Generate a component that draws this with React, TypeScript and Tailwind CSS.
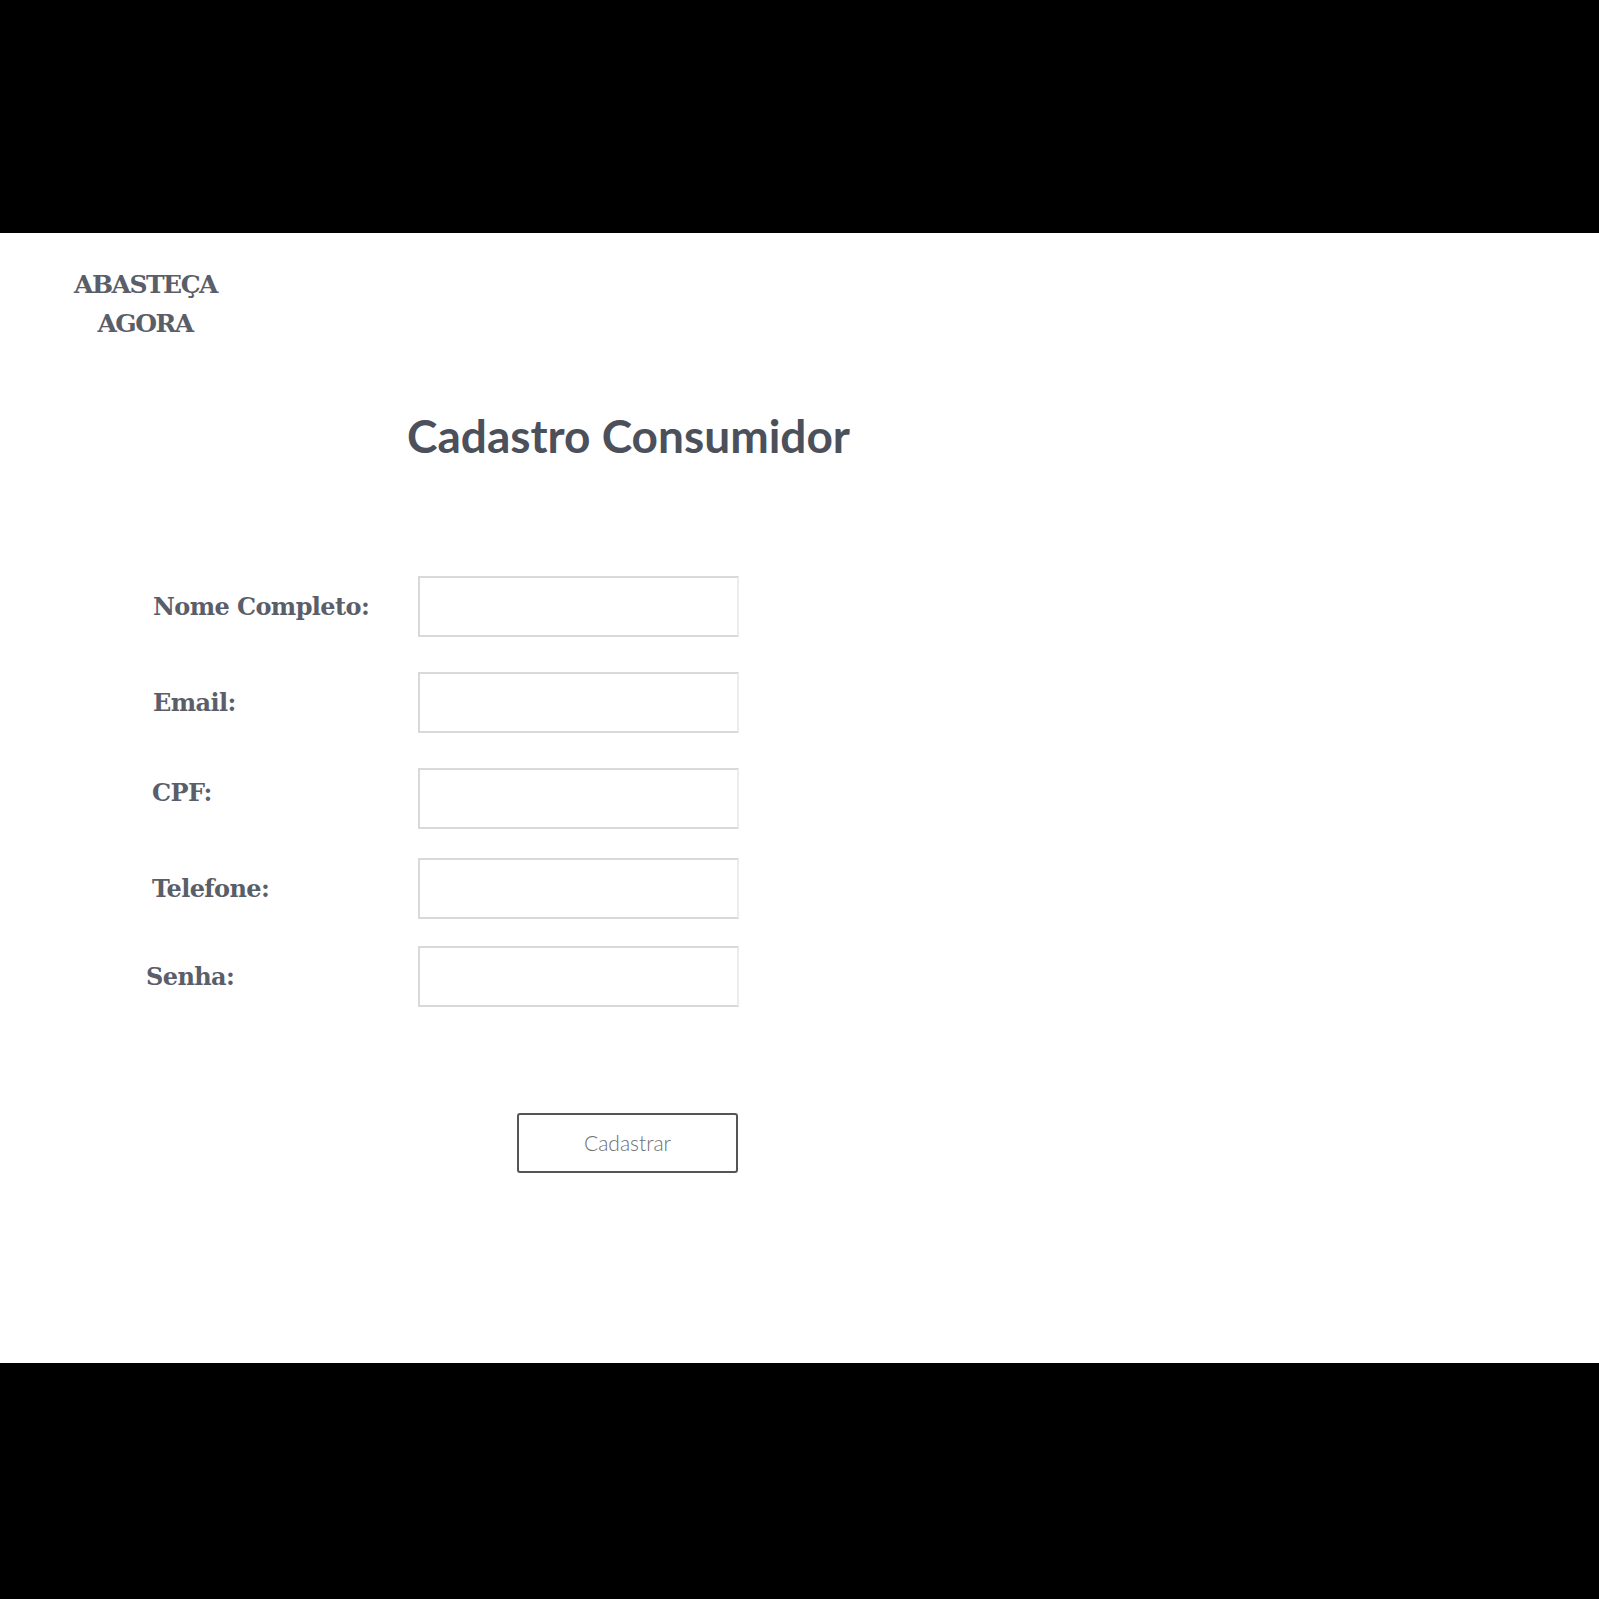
import React from "react";

const labelFont = { fontFamily: '"DejaVu Serif", "Liberation Serif", serif' };

function Row({
  label,
  top,
  labelPl = "pl-[153px]",
  labelMb = "",
}: {
  label: string;
  top: string;
  labelPl?: string;
  labelMb?: string;
}) {
  return (
    <div className={`flex items-center ${top}`}>
      <div className={`w-[418px] ${labelPl} ${labelMb}`}>
        <span
          className="text-[24px] font-bold text-[#5a5e69] tracking-[-0.6px]"
          style={labelFont}
        >
          {label}
        </span>
      </div>
      <input
        type="text"
        className="h-[61px] w-[321px] border-2 border-[#d9d9d9] border-r-[#ececec] bg-white outline-none"
      />
    </div>
  );
}

export default function App() {
  return (
    <div className="flex h-[1599px] w-[1599px] flex-col bg-black">
      <div className="h-[233px] shrink-0 bg-black" />
      <div className="flex h-[1130px] shrink-0 flex-col bg-white">
        <div className="pl-[74px] pt-[32px]">
          <div
            className="w-[142px] text-center text-[25px] font-bold leading-[39px] text-[#5a5e68] tracking-[-1.5px]"
            style={labelFont}
          >
            <div>ABASTEÇA</div>
            <div>AGORA</div>
          </div>
        </div>
        <div className="pl-[407px] pt-[65px]">
          <h1
            className="text-[46px] font-bold leading-[56px] text-[#4b505b]"
            style={{ fontFamily: 'Lato, "Liberation Sans", sans-serif' }}
          >
            Cadastro Consumidor
          </h1>
        </div>
        <div className="flex flex-col">
          <Row label="Nome Completo:" top="mt-[112px]" />
          <Row label="Email:" top="mt-[35px]" />
          <Row label="CPF:" top="mt-[35px]" labelPl="pl-[152px]" labelMb="mb-[12px]" />
          <Row label="Telefone:" top="mt-[29px]" labelPl="pl-[152px]" />
          <Row label="Senha:" top="mt-[27px]" labelPl="pl-[146px]" />
        </div>
        <div className="pl-[517px] pt-[106px]">
          <button
            type="button"
            className="flex h-[60px] w-[221px] items-center justify-center rounded-[3px] border-2 border-[#555555] bg-white text-[21px] font-light text-[#6e6e6e]"
            style={{ fontFamily: 'Lato, "Liberation Sans", sans-serif' }}
          >
            Cadastrar
          </button>
        </div>
      </div>
      <div className="flex-1 bg-black" />
    </div>
  );
}
